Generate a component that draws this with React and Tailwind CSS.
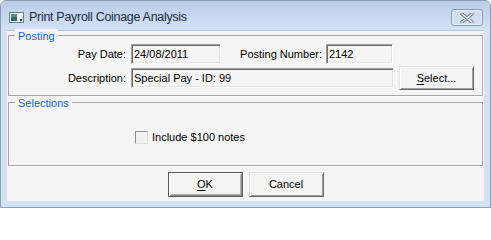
import React from 'react';

const Field = ({ value, className }) => (
  <div
    className={`h-[20px] flex items-center pl-[2px] text-[11px] text-black bg-[#f5f5f5] border border-t-[#a0a0a0] border-l-[#a0a0a0] border-b-white border-r-white shadow-[inset_1px_1px_0_#6d6d6d,inset_-1px_-1px_0_#e3e3e3] ${className}`}
  >
    {value}
  </div>
);

const Button = ({ children, isDefault, className }) => (
  <button
    className={`flex items-center justify-center text-[11px] text-black bg-[#f4f4f4] ${
      isDefault
        ? "border border-[#5a5a5a] shadow-[inset_1px_1px_0_#ffffff,inset_-1px_-1px_0_#8a8a8a,inset_2px_2px_0_#f4f4f4,inset_-2px_-2px_0_#b0b0b0]"
        : "border border-t-[#e3e3e3] border-l-[#e3e3e3] border-b-[#696969] border-r-[#696969] shadow-[inset_1px_1px_0_#ffffff,inset_-1px_-1px_0_#a0a0a0]"
    } ${className}`}
  >
    {children}
  </button>
);

const GroupBox = ({ title, className, children }) => (
  <div className={`relative border border-[#a7a7a7] shadow-[1px_1px_0_#ffffff] ${className}`}>
    <span className="absolute left-[6px] top-[-7px] px-[3px] bg-[#f5f5f5] text-[11px] leading-[14px] text-[#1366cc]">
      {title}
    </span>
    {children}
  </div>
);

export default function App() {
  return (
    <div className="w-[491px] h-[208px] flex flex-col bg-[#d3e2f4] border border-[#8e9fb5] rounded-t-[6px] font-[Liberation_Sans,Arial,sans-serif]">
      {/* Title bar */}
      <div className="h-[29px] flex items-center rounded-t-[6px] bg-linear-to-b from-[#bacde6] to-[#d3e2f4]">
        <svg width="15" height="11" viewBox="0 0 15 11" className="ml-[8px] mt-[3px]">
          <rect x="0.5" y="0.5" width="14" height="10" fill="#eef2f6" stroke="#6b7c8e" />
          <rect x="2" y="2" width="6" height="7" fill="#2f6b6a" />
          <rect x="2" y="2" width="6" height="3" fill="#4f8f8c" />
          <rect x="11" y="7" width="2" height="2" fill="#333" />
        </svg>
        <span className="ml-[5px] mt-[3px] text-[12.5px] text-[#1a2b40] tracking-[-0.3px]">
          Print Payroll Coinage Analysis
        </span>
        <div className="ml-auto mr-[7px] mt-[4px] w-[32px] h-[17px] flex items-center justify-center rounded-[3px] border border-[#8a9cb7] bg-[#d2deee] shadow-[inset_0_0_0_1px_#e8eef7]">
          <svg width="14" height="10" viewBox="0 0 14 10">
            <path d="M2 1 L12 9 M12 1 L2 9" stroke="#6d7a8c" strokeWidth="3.4" strokeLinecap="round" />
            <path d="M2 1 L12 9 M12 1 L2 9" stroke="#ffffff" strokeWidth="1.6" strokeLinecap="round" />
          </svg>
        </div>
      </div>

      {/* Client area inside the window frame */}
      <div className="mx-[6px] h-[171px] bg-[#f5f5f5] border-t border-[#b4c4d8] pt-[4px] px-[1px] flex flex-col">
        <GroupBox title="Posting" className="h-[61px] pt-[8px]">
          <div className="flex items-center">
            <div className="w-[117px] text-right text-[11px] text-black">Pay Date:</div>
            <Field value="24/08/2011" className="ml-[5px] w-[90px]" />
            <div className="w-[101px] text-right text-[11px] text-black">Posting Number:</div>
            <Field value="2142" className="ml-[4px] w-[67px]" />
          </div>
          <div className="flex items-center mt-[2px]">
            <div className="w-[117px] text-right text-[11px] text-black">Description:</div>
            <Field value="Special Pay - ID: 99" className="ml-[5px] w-[263px]" />
            <Button className="ml-[5px] w-[75px] h-[24px]">
              <u className="underline-offset-[2px]">S</u>elect...
            </Button>
          </div>
        </GroupBox>

        <GroupBox title="Selections" className="mt-[6px] h-[64px] pt-[26px]">
          <div className="flex items-center pl-[126px]">
            <div className="w-[13px] h-[13px] bg-[#f2f2f2] border border-t-[#8f8f8f] border-l-[#8f8f8f] border-b-[#dcdcdc] border-r-[#dcdcdc]" />
            <span className="ml-[4px] text-[11px] text-black">Include $100 notes</span>
          </div>
        </GroupBox>

        <div className="mt-[6px] flex justify-center gap-[6px]">
          <Button isDefault className="w-[75px] h-[25px]">
            <u className="underline-offset-[2px]">O</u>K
          </Button>
          <Button className="w-[75px] h-[25px]">Cancel</Button>
        </div>
      </div>
    </div>
  );
}
